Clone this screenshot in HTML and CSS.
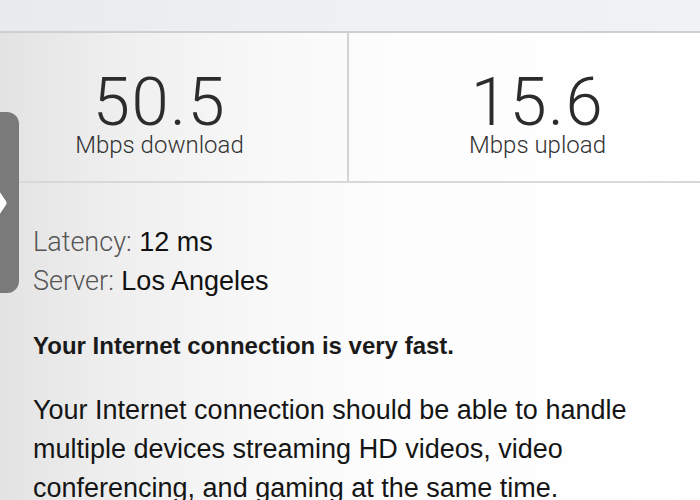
FILE: index.html
```html
<!DOCTYPE html>
<html>
<head>
<meta charset="utf-8">
<link rel="stylesheet" href="styles.css">
</head>
<body>
<div class="screen">
  <div class="topbar"></div>
  <div class="stats">
    <div class="stat stat-left">
      <div class="num">50.5</div>
      <div class="label">Mbps download</div>
    </div>
    <div class="stat">
      <div class="num">15.6</div>
      <div class="label">Mbps upload</div>
    </div>
  </div>
  <div class="content">
    <p class="meta"><span class="key">Latency:</span> 12 ms</p>
    <p class="meta"><span class="key">Server:</span> Los Angeles</p>
    <p class="headline">Your Internet connection is very fast.</p>
    <p class="desc">Your Internet connection should be able to handle multiple devices streaming HD videos, video conferencing, and gaming at the same time.</p>
  </div>
  <div class="tab">
    <svg width="19" height="181" viewBox="0 0 19 181">
      <path d="M-9 73 L3 91 L-9 109" fill="none" stroke="#ffffff" stroke-width="7" stroke-linecap="round" stroke-linejoin="round"/>
    </svg>
  </div>
</div>
</body>
</html>
```

FILE: styles.css
```css
html, body {
  margin: 0;
  padding: 0;
}
body {
  width: 700px;
  height: 500px;
  overflow: hidden;
}
.screen {
  position: relative;
  width: 700px;
  height: 500px;
  overflow: hidden;
  background: linear-gradient(90deg, #e3e3e3 0px, #efefef 120px, #f8f8f8 260px, #fdfdfd 400px, #ffffff 700px);
  font-family: "Liberation Sans", Arial, sans-serif;
  color: #111;
}
.topbar {
  height: 31px;
  border-bottom: 2px solid #cdcfd0;
  background: linear-gradient(90deg, #e8eaeb 0px, #eef0f1 300px, #f1f2f3 700px);
}
.stats {
  display: grid;
  grid-template-columns: 377px 377px;
  margin-left: -28px;
  width: 754px;
  height: 150px;
  box-sizing: border-box;
  border-bottom: 2px solid #d8d8d8;
}
.stat {
  display: flex;
  flex-direction: column;
  align-items: center;
  padding-top: 39px;
  box-sizing: border-box;
}
.stat-left {
  border-right: 2px solid #d4d4d4;
}
.num {
  font-family: Roboto, "Liberation Sans", sans-serif;
  font-weight: 300;
  font-size: 67px;
  line-height: 60px;
  color: #2c2c2c;
  letter-spacing: 1.5px;
}
.label {
  font-family: Roboto, "Liberation Sans", sans-serif;
  font-weight: 300;
  font-size: 24px;
  line-height: 26px;
  color: #333;
}
.content {
  padding: 40px 0 0 33px;
}
.content p {
  margin: 0;
  font-size: 27px;
  line-height: 39px;
}
.key {
  font-family: Roboto, "Liberation Sans", sans-serif;
  font-weight: 300;
  color: #555;
}
.headline {
  margin-top: 25px !important;
  font-weight: 700;
  font-size: 24px !important;
  color: #1a1a1a;
}
.desc {
  margin-top: 26px !important;
  width: 650px;
  color: #151515;
}
.tab {
  position: absolute;
  left: 0;
  top: 112px;
  width: 19px;
  height: 181px;
  background: #7a7a7a;
  border-radius: 0 12px 12px 0;
}
.tab svg {
  display: block;
}
```
